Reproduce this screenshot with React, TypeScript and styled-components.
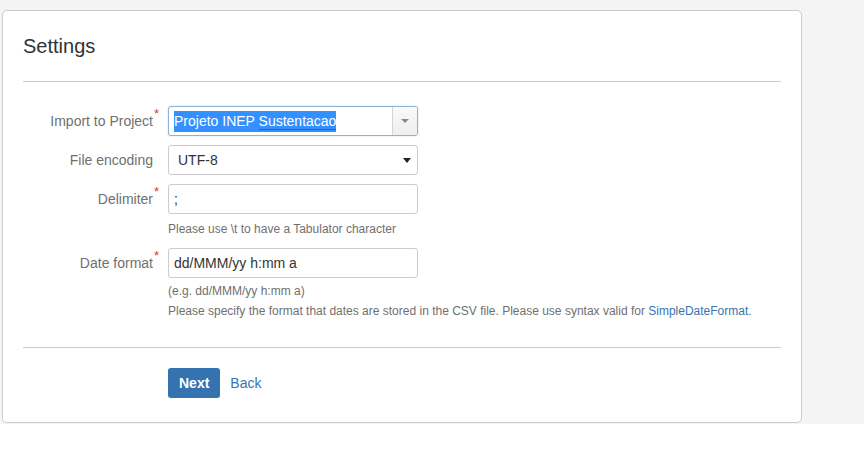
import React from "react";
import styled, { createGlobalStyle } from "styled-components";

const GlobalStyle = createGlobalStyle`
  html, body { margin: 0; padding: 0; background: #ffffff; }
  body { font-family: "Liberation Sans", Arial, sans-serif; font-size: 14px; color: #333333; }
  * { box-sizing: border-box; }
`;

const Page = styled.div`
  background: #f4f4f4;
  height: 424px;
  padding: 10px 62px 0 2px;
`;

const Card = styled.section`
  background: #ffffff;
  border: 1px solid #cccccc;
  border-radius: 5px;
  height: 413px;
  padding: 0 20px;
  display: flex;
  flex-direction: column;
`;

const Header = styled.header`
  padding: 23px 0 23px;
  border-bottom: 1px solid #cccccc;
`;

const Title = styled.h2`
  margin: 0;
  font-size: 20px;
  line-height: 24px;
  font-weight: normal;
  color: #333333;
`;

const Form = styled.div`
  padding: 24px 0 26px;
  border-bottom: 1px solid #cccccc;
  display: flex;
  flex-direction: column;
  gap: 9px;
`;

const Row = styled.div`
  display: grid;
  grid-template-columns: 130px 250px;
  column-gap: 15px;
`;

const Label = styled.label`
  position: relative;
  justify-self: end;
  color: #707070;
  font-size: 14px;
  line-height: 30px;
  height: 30px;
`;

const Required = styled.span`
  position: absolute;
  left: 100%;
  top: -7px;
  margin-left: 1px;
  color: #d04437;
  font-size: 13px;
`;

const FieldCol = styled.div`
  display: flex;
  flex-direction: column;
`;

const Box = styled.div<{ $focused?: boolean }>`
  position: relative;
  height: 30px;
  width: 250px;
  border: 1px solid ${(p) => (p.$focused ? "#8fb1d9" : "#cccccc")};
  border-radius: 3px;
  background: #ffffff;
  display: flex;
  align-items: center;
  font-size: 14px;
  color: #333333;
  box-shadow: ${(p) => (p.$focused ? "0 0 2px rgba(74,144,217,0.35)" : "none")};
`;

const BoxText = styled.span<{ $pad: number }>`
  flex: 1;
  padding-left: ${(p) => p.$pad}px;
  white-space: nowrap;
`;

const Selected = styled.span`
  background: #3390ff;
  color: #ffffff;
  padding: 2px 0 3px;
`;

const Squiggle = styled.span`
  border-bottom: 1px solid #8a3a9a;
`;

const ArrowCell = styled.span`
  width: 25px;
  align-self: stretch;
  border-left: 1px solid #d3d3d3;
  background: linear-gradient(#fafafa, #eeeeee);
  border-radius: 0 2px 2px 0;
  display: flex;
  align-items: center;
  justify-content: center;
`;

const Caret = styled.span<{ $color: string; $size: number; $h: number }>`
  width: 0;
  height: 0;
  border-left: ${(p) => p.$size}px solid transparent;
  border-right: ${(p) => p.$size}px solid transparent;
  border-top: ${(p) => p.$h}px solid ${(p) => p.$color};
`;

const NativeArrow = styled.span`
  width: 20px;
  display: flex;
  justify-content: center;
`;

const Description = styled.div<{ $top: number }>`
  margin-top: ${(p) => p.$top}px;
  font-size: 12px;
  line-height: 20px;
  color: #707070;
  white-space: nowrap;
`;

const Link = styled.a`
  color: #3b73af;
  text-decoration: none;
`;

const Buttons = styled.div`
  padding: 20px 0 0 145px;
  display: flex;
  align-items: center;
  gap: 10px;
`;

const Button = styled.button`
  height: 30px;
  padding: 0 11px;
  border: none;
  border-radius: 3px;
  background: #3572b0;
  color: #ffffff;
  font-family: "Liberation Sans", Arial, sans-serif;
  font-weight: bold;
  font-size: 14px;
`;

export default function App() {
  return (
    <>
      <GlobalStyle />
      <Page>
        <Card>
          <Header>
            <Title>Settings</Title>
          </Header>
          <Form>
            <Row>
              <Label>
                Import to Project<Required>*</Required>
              </Label>
              <FieldCol>
                <Box $focused>
                  <BoxText $pad={5}>
                    <Selected>
                      Projeto INEP <Squiggle>Sustentacao</Squiggle>
                    </Selected>
                  </BoxText>
                  <ArrowCell>
                    <Caret $color="#888888" $size={4} $h={4} />
                  </ArrowCell>
                </Box>
              </FieldCol>
            </Row>
            <Row>
              <Label>File encoding</Label>
              <FieldCol>
                <Box>
                  <BoxText $pad={9}>UTF-8</BoxText>
                  <NativeArrow>
                    <Caret $color="#222222" $size={4} $h={5} />
                  </NativeArrow>
                </Box>
              </FieldCol>
            </Row>
            <Row>
              <Label>
                Delimiter<Required>*</Required>
              </Label>
              <FieldCol>
                <Box>
                  <BoxText $pad={5}>;</BoxText>
                </Box>
                <Description $top={5}>Please use \t to have a Tabulator character</Description>
              </FieldCol>
            </Row>
            <Row>
              <Label>
                Date format<Required>*</Required>
              </Label>
              <FieldCol>
                <Box>
                  <BoxText $pad={5}>dd/MMM/yy h:mm a</BoxText>
                </Box>
                <Description $top={3}>(e.g. dd/MMM/yy h:mm a)</Description>
                <Description $top={0}>
                  Please specify the format that dates are stored in the CSV file. Please use syntax valid for{" "}
                  <Link href="#">SimpleDateFormat</Link>.
                </Description>
              </FieldCol>
            </Row>
          </Form>
          <Buttons>
            <Button>Next</Button>
            <Link href="#">Back</Link>
          </Buttons>
        </Card>
      </Page>
    </>
  );
}
